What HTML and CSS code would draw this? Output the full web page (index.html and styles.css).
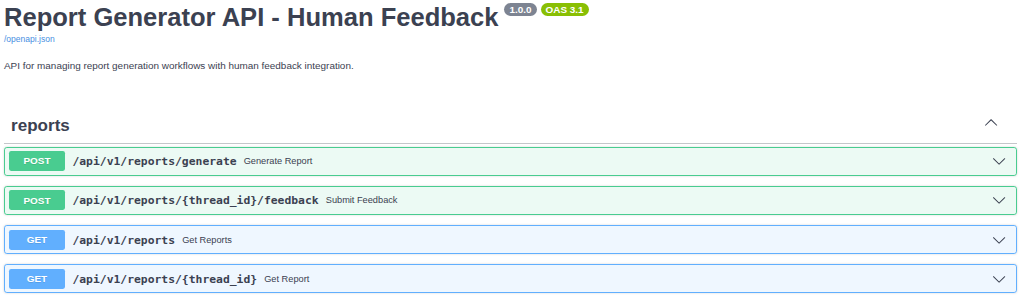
FILE: index.html
```html
<!DOCTYPE html>
<html lang="en">
<head>
<meta charset="utf-8">
<title>Report Generator API - Human Feedback</title>
<link rel="stylesheet" href="styles.css">
</head>
<body>
<div class="wrapper">
  <section class="info">
    <h2 class="title">
      <span class="title-text">Report Generator API - Human Feedback</span>
      <span class="badges">
        <small class="badge badge-version">1.0.0</small>
        <small class="badge badge-oas">OAS 3.1</small>
      </span>
    </h2>
    <a class="link" href="#">/openapi.json</a>
    <p class="description">API for managing report generation workflows with human feedback integration.</p>
  </section>

  <section class="tag-section">
    <h3 class="opblock-tag">
      <span class="tag-name">reports</span>
      <button class="expand-tag" aria-label="Collapse">
        <svg class="arrow" viewBox="0 0 20 20" aria-hidden="true"><path d="M17.418 14.908c.272.268.709.268.979 0s.271-.701 0-.969l-7.908-7.83c-.27-.268-.707-.268-.979 0l-7.908 7.83c-.27.268-.27.701 0 .969.271.268.709.268.979 0L10 7.767l7.418 7.141z"/></svg>
      </button>
    </h3>

    <div class="opblock opblock-post">
      <div class="summary">
        <span class="method">POST</span>
        <span class="path">/api/v1/reports/generate</span>
        <span class="summary-desc">Generate Report</span>
        <span class="control"><svg class="arrow" viewBox="0 0 20 20" aria-hidden="true"><path d="M17.418 6.109c.272-.268.709-.268.979 0s.271.701 0 .969l-7.908 7.83c-.27.268-.707.268-.979 0l-7.908-7.83c-.27-.268-.27-.701 0-.969.271-.268.709-.268.979 0L10 13.25l7.418-7.141z"/></svg></span>
      </div>
    </div>

    <div class="opblock opblock-post">
      <div class="summary">
        <span class="method">POST</span>
        <span class="path">/api/v1/reports/{thread_id}/feedback</span>
        <span class="summary-desc">Submit Feedback</span>
        <span class="control"><svg class="arrow" viewBox="0 0 20 20" aria-hidden="true"><path d="M17.418 6.109c.272-.268.709-.268.979 0s.271.701 0 .969l-7.908 7.83c-.27.268-.707.268-.979 0l-7.908-7.830c-.27-.268-.27-.701 0-.969.271-.268.709-.268.979 0L10 13.25l7.418-7.141z"/></svg></span>
      </div>
    </div>

    <div class="opblock opblock-get">
      <div class="summary">
        <span class="method">GET</span>
        <span class="path">/api/v1/reports</span>
        <span class="summary-desc">Get Reports</span>
        <span class="control"><svg class="arrow" viewBox="0 0 20 20" aria-hidden="true"><path d="M17.418 6.109c.272-.268.709-.268.979 0s.271.701 0 .969l-7.908 7.83c-.27.268-.707.268-.979 0l-7.908-7.83c-.27-.268-.27-.701 0-.969.271-.268.709-.268.979 0L10 13.25l7.418-7.141z"/></svg></span>
      </div>
    </div>

    <div class="opblock opblock-get">
      <div class="summary">
        <span class="method">GET</span>
        <span class="path">/api/v1/reports/{thread_id}</span>
        <span class="summary-desc">Get Report</span>
        <span class="control"><svg class="arrow" viewBox="0 0 20 20" aria-hidden="true"><path d="M17.418 6.109c.272-.268.709-.268.979 0s.271.701 0 .969l-7.908 7.83c-.27.268-.707.268-.979 0l-7.908-7.83c-.27-.268-.27-.701 0-.969.271-.268.709-.268.979 0L10 13.25l7.418-7.141z"/></svg></span>
      </div>
    </div>
  </section>
</div>
</body>
</html>
```

FILE: styles.css
```css
* {
  box-sizing: border-box;
}

html, body {
  margin: 0;
  padding: 0;
  background: #ffffff;
}

body {
  font-family: "Liberation Sans", Arial, sans-serif;
  color: #3b4151;
}

.wrapper {
  padding: 3px 4px 0 4px;
}

/* ---------- info ---------- */
.title {
  display: flex;
  align-items: flex-start;
  margin: 0;
  font-size: 25.56px;
  line-height: 29px;
  font-weight: 700;
  color: #3b4151;
}

.badges {
  display: flex;
  gap: 4px;
  margin-left: 6px;
}

.badge {
  display: inline-block;
  font-size: 9.94px;
  line-height: 13px;
  height: 13px;
  padding: 0 5px;
  border-radius: 40px;
  color: #ffffff;
  font-weight: 700;
}

.badge-version {
  background: #7d8492;
}

.badge-oas {
  background: #89bf04;
}

.link {
  display: block;
  margin-top: 2px;
  font-size: 8.52px;
  line-height: 10px;
  color: #4990e2;
  text-decoration: none;
}

.description {
  margin: 15.5px 0 0 0;
  font-size: 9.94px;
  line-height: 12px;
  color: #3b4151;
}

/* ---------- tag ---------- */
.tag-section {
  margin-top: 36.2px;
}

.opblock-tag {
  display: flex;
  align-items: center;
  margin: 0 0 2.5px 0;
  padding: 7.1px 14.2px 7.1px 7.1px;
  border-bottom: 1px solid rgba(59, 65, 81, 0.3);
  font-size: 17.04px;
  line-height: 19.6px;
  font-weight: 700;
  color: #3b4151;
}

.tag-name {
  flex: 1;
}

.expand-tag {
  display: flex;
  border: none;
  background: none;
  padding: 0;
  margin: 0 4.7px 7px 0;
  cursor: pointer;
}

.arrow {
  width: 14.2px;
  height: 14.2px;
  fill: #3b4151;
  display: block;
}

/* ---------- operations ---------- */
.opblock {
  margin: 0 0 10.3px 0;
  border: 1px solid #000;
  border-radius: 2.84px;
  box-shadow: 0 0 2.13px rgba(0, 0, 0, 0.19);
}

.opblock-post {
  border-color: #49cc90;
  background: rgba(73, 204, 144, 0.1);
}

.opblock-get {
  border-color: #61affe;
  background: rgba(97, 175, 254, 0.1);
}

.summary {
  display: flex;
  align-items: center;
  padding: 3.55px;
}

.method {
  min-width: 56.8px;
  padding: 4.26px 0;
  border-radius: 2.13px;
  font-size: 9.94px;
  line-height: 11.4px;
  font-weight: 700;
  text-align: center;
  color: #ffffff;
  text-shadow: 0 0.71px 0 rgba(0, 0, 0, 0.1);
}

.opblock-post .method {
  background: #49cc90;
}

.opblock-get .method {
  background: #61affe;
}

.path {
  padding: 0 7.1px;
  font-family: "DejaVu Sans Mono", "Liberation Mono", monospace;
  font-size: 11.36px;
  font-weight: 700;
  color: #3b4151;
}

.summary-desc {
  flex: 1;
  font-size: 9.23px;
  color: #3b4151;
}

.control {
  display: flex;
  padding-right: 6.4px;
}
```
